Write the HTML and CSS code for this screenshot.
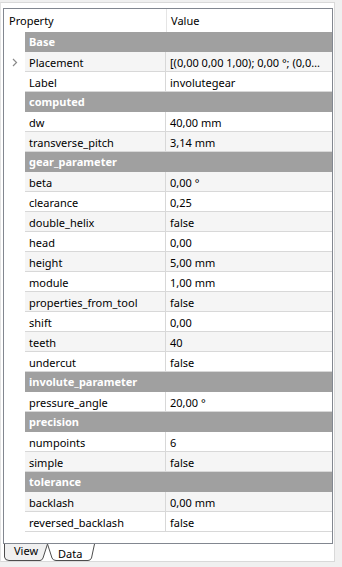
FILE: index.html
```html
<!DOCTYPE html>
<html lang="en">
<head>
    <meta charset="UTF-8">
    <title>Property View</title>
    <link rel="stylesheet" href="styles.css">
</head>
<body>

<div class="panel">
    <div class="tree">
        <div class="header">
            <div class="h-name">Property</div>
            <div class="h-value">Value</div>
        </div>
        <div id="rows">
            <!-- rows are built below -->
        </div>
    </div>

    <div class="tabs">
        <svg class="tab-shapes" width="100" height="18" viewBox="0 0 100 18">
            <path d="M3.5 0 L3.5 13 Q4 16.5 8 16.5 L39 16.5 Q41 16.5 42 14 L46.5 0" fill="#f0f0f0" stroke="#4d4d4d"/>
            <path d="M46.5 0 L51 14 Q52 16.5 55 16.5 L87 16.5 Q89.5 16.5 90.5 14 L93.5 0" fill="#fff" stroke="#4d4d4d"/>
        </svg>
        <span class="tab">View</span>
        <span class="tab active">Data</span>
    </div>
</div>

<script>
const groups = [
    { name: "Base", props: [["Placement", "[(0,00 0,00 1,00); 0,00 °; (0,00 0,00 0,00)]", true], ["Label", "involutegear"]] },
    { name: "computed", props: [["dw", "40,00 mm"], ["transverse_pitch", "3,14 mm"]] },
    { name: "gear_parameter", props: [
        ["beta", "0,00 °"], ["clearance", "0,25"], ["double_helix", "false"], ["head", "0,00"],
        ["height", "5,00 mm"], ["module", "1,00 mm"], ["properties_from_tool", "false"],
        ["shift", "0,00"], ["teeth", "40"], ["undercut", "false"]
    ] },
    { name: "involute_parameter", props: [["pressure_angle", "20,00 °"]] },
    { name: "precision", props: [["numpoints", "6"], ["simple", "false"]] },
    { name: "tolerance", props: [["backlash", "0,00 mm"], ["reversed_backlash", "false"]] }
];

const rowsDiv = document.getElementById("rows");
let index = 0;

groups.forEach(group => {
    const g = document.createElement("div");
    g.className = "row";
    g.innerHTML = `<div class="indent"></div><div class="group">${group.name}</div>`;
    rowsDiv.appendChild(g);
    index++;

    group.props.forEach(prop => {
        const row = document.createElement("div");
        row.className = "row";
        const arrow = prop[2] ? `<svg width="6" height="9" viewBox="0 0 6 9"><path d="M1 1 L4.5 4.5 L1 8" fill="none" stroke="#8a8a8a" stroke-width="1.2"/></svg>` : "";
        row.innerHTML = `<div class="indent">${arrow}</div>
            <div class="line ${index % 2 ? "alt" : ""}">
                <div class="name">${prop[0]}</div>
                <div class="value">${prop[1]}</div>
            </div>`;
        rowsDiv.appendChild(row);
        index++;
    });
});
</script>

</body>
</html>
```

FILE: styles.css
```css
body {
    margin: 0;
    background-color: #f0f0f0;
    font-family: "Noto Sans", "DejaVu Sans", sans-serif;
    font-size: 11px;
    color: #000;
}
.panel {
    width: 335px;
    height: 560px;
    margin-top: 2px;
    background-color: #fff;
    border: 1px solid #d9d9d9;
    border-left-color: #e3e3e3;
    padding: 5px 0 0 2px;
    box-sizing: border-box;
}
.tree {
    width: 330px;
    height: 536px;
    border: 1px solid #828790;
    box-sizing: border-box;
    background-color: #fff;
    overflow: hidden;
}
.header {
    display: flex;
    height: 23px;
    line-height: 24px;
}
.h-name {
    width: 157px;
    padding-left: 5px;
    border-right: 1px solid #e5e5e5;
}
.h-value {
    padding-left: 4px;
}
.row {
    display: flex;
    height: 20px;
}
.indent {
    width: 21px;
    flex-shrink: 0;
    display: flex;
    align-items: center;
    padding-left: 8px;
    box-sizing: border-box;
}
.group {
    flex: 1;
    background-color: #a0a0a0;
    color: #fff;
    font-weight: bold;
    padding-left: 4px;
    line-height: 20px;
}
.line {
    flex: 1;
    min-width: 0;
    display: flex;
    border-bottom: 1px solid #d8d8d8;
    line-height: 21px;
}
.line.alt {
    background-color: #f5f5f5;
}
.name {
    width: 136px;
    padding-left: 4px;
    border-right: 1px solid #d8d8d8;
    flex-shrink: 0;
}
.value {
    flex: 1;
    min-width: 0;
    padding: 0 6px 0 4px;
    white-space: nowrap;
    overflow: hidden;
    text-overflow: ellipsis;
}
.tabs {
    position: relative;
    display: flex;
    height: 18px;
}
.tab-shapes {
    position: absolute;
    left: -2px;
    top: 0;
}
.tab {
    position: relative;
    line-height: 14px;
}
.tab:first-of-type {
    margin-left: 11px;
}
.tab.active {
    margin-left: 20px;
    line-height: 20px;
}
```
